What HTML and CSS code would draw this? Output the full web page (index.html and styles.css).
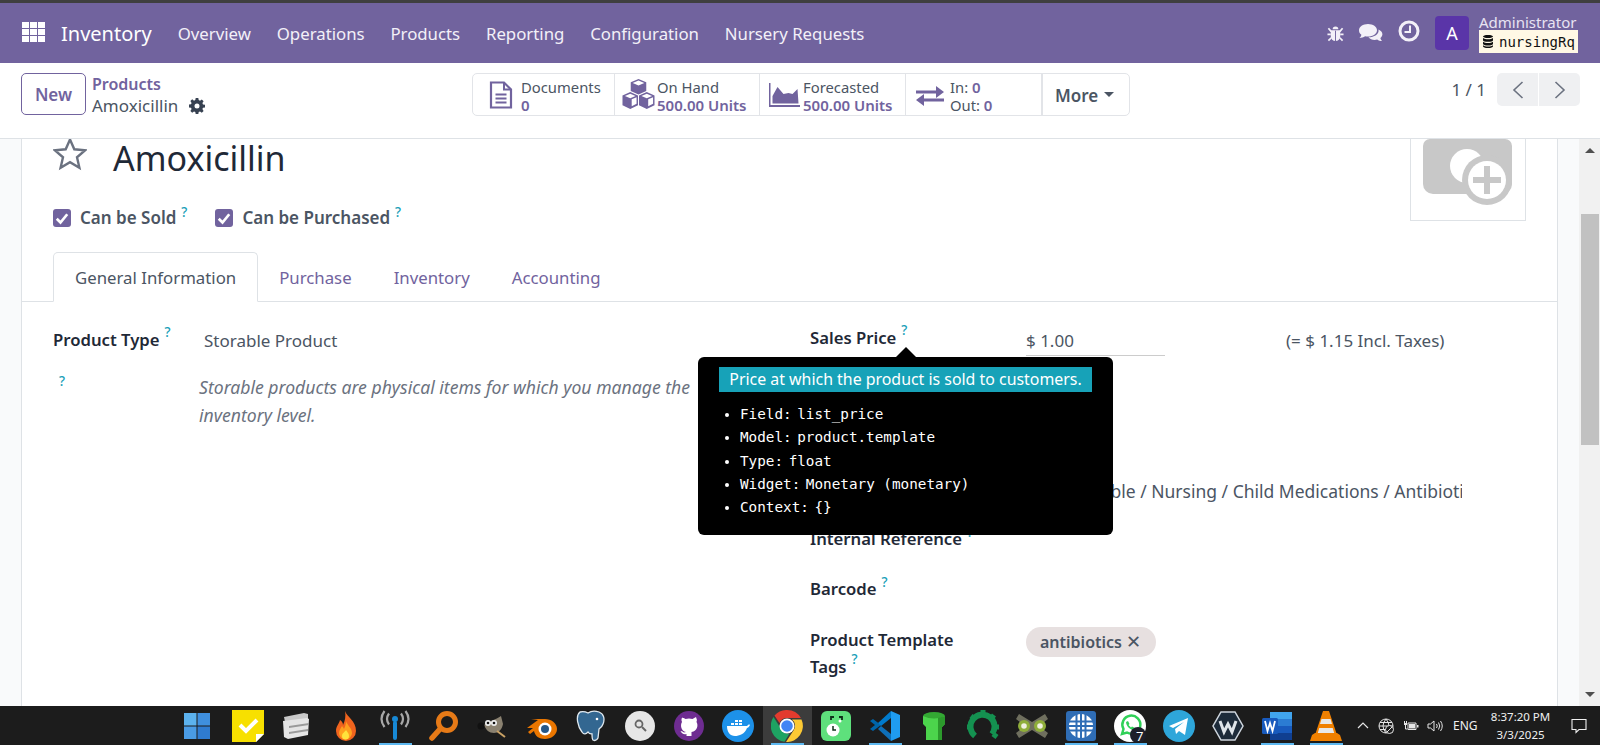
FILE: index.html
```html
<!DOCTYPE html>
<html lang="en">
<head>
    <meta charset="UTF-8">
    <meta name="viewport" content="width=device-width, initial-scale=1.0">
    <title>Amoxicillin - Inventory</title>
    <link rel="stylesheet" href="styles.css">
</head>
<body>

<div class="top-strip"></div>

<!-- Main navbar -->
<header class="navbar">
    <svg class="apps-icon" viewBox="0 0 23 20"><path fill="#fff" d="M0 0h7v6H0zM8 0h7v6H8zM16 0h7v6h-7zM0 7h7v6H0zM8 7h7v6H8zM16 7h7v6h-7zM0 14h7v6H0zM8 14h7v6H8zM16 14h7v6h-7z"/></svg>
    <span class="brand">Inventory</span>
    <nav class="menu">
        <a>Overview</a>
        <a>Operations</a>
        <a>Products</a>
        <a>Reporting</a>
        <a>Configuration</a>
        <a>Nursery Requests</a>
    </nav>
    <div class="systray">
        <svg class="tray-bug" viewBox="0 0 18 18"><path fill="#f3f0f8" d="M6 4.500a3 3 0 0 1 6 0zM5 5.500h8a1 1 0 0 1 1 1V12a5 5 0 0 1-10 0V6.500a1 1 0 0 1 1-1z"/><path stroke="#f3f0f8" stroke-width="1.800" fill="none" d="M1.500 3.500 4.500 7M16.500 3.500 13.500 7M.5 10h3.500M14 10h3.500M1.500 16.500l3-3M16.500 16.500l-3-3"/><path stroke="#71639e" d="M9 6v11"/></svg>
        <svg class="tray-chat" viewBox="0 0 25 20"><path fill="#f3f0f8" d="M10 1c5 0 9 2.800 9 6.300s-4 6.300-9 6.300c-1 0-2-.1-2.900-.3C5.500 14.500 3.500 15 1.500 15c1-1 1.800-2.200 1.900-3.300C1.600 10.500 1 9 1 7.300 1 3.800 5 1 10 1z"/><path fill="#f3f0f8" d="M20.500 6.500c2.400 1 3.900 2.800 3.900 4.800 0 1.500-.8 2.800-2 3.800.1 1.100.8 2.200 1.600 3-1.800 0-3.400-.5-4.800-1.500-.8.200-1.600.3-2.500.3-2.700 0-5-1-6.300-2.600 5.800 0 11-3 10.100-7.800z"/></svg>
        <svg class="tray-clock" viewBox="0 0 22 22"><circle cx="11" cy="11" r="9" fill="none" stroke="#f3f0f8" stroke-width="3"/><path fill="none" stroke="#f3f0f8" stroke-width="2" d="M12 5.500V12H6.500"/></svg>
        <div class="avatar">A</div>
        <div class="user">
            <div class="user-name">Administrator</div>
            <div class="db-badge">
                <svg class="db-icon" viewBox="0 0 12 13"><path fill="#111" d="M1 1.500C1 .6 3 0 6 0s5 .6 5 1.500S9 3 6 3 1 2.400 1 1.500zM1 3c1 .9 3 1.300 5 1.300S10 3.900 11 3v2.200C11 6.100 9 6.800 6 6.800S1 6.100 1 5.200zM1 6.800c1 .9 3 1.300 5 1.300s4-.4 5-1.300V9C11 9.900 9 10.500 6 10.500S1 9.900 1 9z"/><path fill="#111" d="M1 10.300c1 .8 3 1.200 5 1.200s4-.4 5-1.200v.9C11 12.200 9 13 6 13s-5-.8-5-1.800z"/></svg>
                <span>nursingRq</span>
            </div>
        </div>
    </div>
</header>

<!-- Control panel -->
<section class="control-panel">
    <button class="btn-new">New</button>
    <div class="breadcrumb">
        <a>Products</a>
        <div class="crumb-current">Amoxicillin
            <svg class="gear" viewBox="0 0 16 16"><path fill="#374151" fill-rule="evenodd" d="M6.700 0h2.600l.4 2.100 1.300.6 1.800-1.200 1.800 1.800-1.200 1.800.6 1.300 2 .4v2.600l-2 .4-.6 1.300 1.200 1.800-1.800 1.800-1.800-1.200-1.300.6-.4 2H6.700l-.4-2-1.300-.6-1.800 1.200-1.800-1.800 1.200-1.800-.6-1.300-2-.4V6.600l2-.4.6-1.300-1.200-1.800 1.800-1.800L5 2.700l1.300-.6zM8 5.500a2.500 2.500 0 1 0 0 5 2.500 2.500 0 0 0 0-5z"/></svg>
        </div>
    </div>

    <div class="stat-bar">
        <div class="stat stat-docs">
            <svg class="stat-icon" width="24" height="28" viewBox="0 0 24 28"><path fill="none" stroke="#71639e" stroke-width="2.200" d="M2 1.500h13l7 7v18H2z"/><path fill="none" stroke="#71639e" stroke-width="2" d="M15 1.500v7h7M6.500 13.500h11M6.500 17.500h11M6.500 21.500h11"/></svg>
            <div class="stat-text"><span>Documents</span><b>0</b></div>
        </div>
        <div class="stat stat-hand">
            <svg class="stat-icon" width="33" height="33" viewBox="0 0 34 34"><path fill="#71639e" d="M17 1l8 3.500v9L17 17l-8-3.500v-9z"/><path fill="#71639e" d="M8.500 14.500l8 3.500v10l-8 4-8-4V18zM25.500 14.500l8 3.500v10l-8 4-8-4V18z"/><path fill="#fff" d="M11 5.200l6 2.600 6-2.600-6-2.500zM3 18.500l5.500 2.300 5.500-2.300-5.500-2.300zM20 18.500l5.500 2.300 5.500-2.300-5.500-2.300zM10 22v7l5-2.500v-6.700zM27 22v7l5-2.500v-6.700z"/></svg>
            <div class="stat-text"><span>On Hand</span><b>500.00 Units</b></div>
        </div>
        <div class="stat stat-fore">
            <svg class="stat-icon" width="31" height="24" viewBox="0 0 31 24"><path fill="#71639e" d="M0 0h1.500v22H31v2H0z"/><path fill="#71639e" d="M3.500 20.500V13l5-9 6 7 5-1 4 1 5-5 1 14.500z"/></svg>
            <div class="stat-text"><span>Forecasted</span><b>500.00 Units</b></div>
        </div>
        <div class="stat stat-move">
            <svg class="stat-icon" width="28" height="24" viewBox="0 0 28 24"><path fill="#71639e" d="M0 6.500h20V2l8 6-8 6V9.500H0zM28 14.500H8V10l-8 6 8 6v-4.500h20z" transform="translate(0 1)"/></svg>
            <div class="stat-text"><span>In: <b>0</b></span><span>Out: <b>0</b></span></div>
        </div>
        <div class="stat-more">More <i class="caret"></i></div>
    </div>

    <div class="pager">
        <span class="pager-count">1 / 1</span>
        <div class="pager-btns">
            <button><svg viewBox="0 0 12 20" width="12" height="20"><path fill="none" stroke="#6b7280" stroke-width="1.600" d="M10.500 2 2 10l8.500 8"/></svg></button>
            <button><svg viewBox="0 0 12 20" width="12" height="20"><path fill="none" stroke="#6b7280" stroke-width="1.600" d="M1.500 2 10 10l-8.500 8"/></svg></button>
        </div>
    </div>
</section>

<!-- Form view -->
<main class="content">
    <div class="sheet">
        <div class="sheet-top">
            <div class="sheet-head">
                <div class="title-row">
                    <svg class="star" viewBox="0 0 34 34"><path fill="none" stroke="#6b7280" stroke-width="2.400" d="M17 2.500l4.300 9.800 10.700 1-8 7 2.400 10.400L17 25.200l-9.400 5.500L10 20.300l-8-7 10.700-1z"/></svg>
                    <h1>Amoxicillin</h1>
                </div>
                <div class="options">
                    <label class="check"><i class="box"><svg viewBox="0 0 12 12"><path fill="none" stroke="#fff" stroke-width="1.800" d="M2.500 6.500 5 9l4.500-5.500"/></svg></i>Can be Sold<sup>?</sup></label>
                    <label class="check"><i class="box"><svg viewBox="0 0 12 12"><path fill="none" stroke="#fff" stroke-width="1.800" d="M2.500 6.500 5 9l4.500-5.500"/></svg></i>Can be Purchased<sup>?</sup></label>
                </div>
            </div>
            <div class="product-image">
                <svg viewBox="0 0 90 68" width="90" height="68"><path fill="#c8c8c8" d="M7 0h75a7 7 0 0 1 7 7v38a10 10 0 0 1-10 10H10A10 10 0 0 1 0 45V7a7 7 0 0 1 7-7z"/><circle cx="44" cy="27" r="17" fill="#fff"/><circle cx="64" cy="41" r="25" fill="#c8c8c8"/><circle cx="64" cy="41" r="19" fill="#fff"/><path fill="#c8c8c8" d="M61 27h6v11h11v6H67v11h-6V44H50v-6h11z"/></svg>
            </div>
        </div>

        <div class="tabs">
            <a class="active">General Information</a>
            <a>Purchase</a>
            <a>Inventory</a>
            <a>Accounting</a>
        </div>

        <div class="form-body">
            <div class="col-left">
                <div class="type-row">
                    <label class="field-label">Product Type<sup>?</sup></label>
                    <span class="type-value">Storable Product</span>
                </div>
                <div class="type-help">
                    <sup class="help-mark">?</sup>
                    <p>Storable products are physical items for which you manage the inventory level.</p>
                </div>
            </div>
            <div class="col-right">
                <div class="row">
                    <label class="field-label">Sales Price<sup>?</sup></label>
                    <div class="price-wrap"><span class="price-input">$ 1.00</span><span class="price-taxes">(= $ 1.15 Incl. Taxes)</span></div>
                </div>
                <div class="row"></div>
                <div class="row"></div>
                <div class="row">
                    <label class="field-label"></label>
                    <div class="category">All / Saleable / Nursing / Child Medications / Antibiotics</div>
                </div>
                <div class="row">
                    <label class="field-label">Internal Reference<sup>?</sup></label>
                </div>
                <div class="row">
                    <label class="field-label">Barcode<sup>?</sup></label>
                </div>
                <div class="row">
                    <label class="field-label field-label-wrap">Product Template Tags<sup>?</sup></label>
                    <div class="tag">antibiotics <span class="tag-x">✕</span></div>
                </div>
            </div>
        </div>
    </div>

    <div class="scrollbar">
        <i class="arrow-up"></i>
        <div class="thumb"></div>
        <i class="arrow-down"></i>
    </div>

    <!-- Debug tooltip -->
    <div class="tooltip">
        <i class="tooltip-arrow"></i>
        <div class="tooltip-title">Price at which the product is sold to customers.</div>
        <ul>
            <li><span>Field:</span> list_price</li>
            <li><span>Model:</span> product.template</li>
            <li><span>Type:</span> float</li>
            <li><span>Widget:</span> Monetary (monetary)</li>
            <li><span>Context:</span> {}</li>
        </ul>
    </div>
</main>

<!-- Windows taskbar -->
<footer class="taskbar">
    <div class="task-apps">
        <div class="task task-start"><svg viewBox="0 0 32 32"><path fill="#5cb2ee" d="M3 3h12.500v12.500H3z"/><path fill="#3f8fde" d="M16.500 3H29v12.500H16.500z"/><path fill="#4a9be4" d="M3 16.500h12.500V29H3z"/><path fill="#2f7bd0" d="M16.500 16.500H29V29H16.500z"/></svg></div>
        <div class="task"><svg viewBox="0 0 32 32"><path fill="#f7e000" d="M0 0h32v24l-8 8H0z"/><path fill="#fff" d="M24 32v-8h8z"/><path fill="none" stroke="#fff" stroke-width="4" d="M8 15l6 6 11-11"/></svg></div>
        <div class="task"><svg viewBox="0 0 32 32"><path fill="#c9c9c9" d="M3 7l20-4 4 1v16L7 26z"/><path fill="#e5e5e5" d="M2 11l24-3 2 1-1 16-20 4-4-2z"/><path fill="#9a9a9a" d="M8 16l20-3v2L8 18zM8 22l19-3v2L8 24z"/></svg></div>
        <div class="task"><svg viewBox="0 0 32 32"><path fill="#f0641e" d="M15 1c2 6 11 10 11 20a10 10 0 0 1-20 0c0-5 3-7 4-11 2 1 3 3 3 5 2-4 3-9 2-14z"/><path fill="#ffa01e" d="M16 11c1 4 6 7 6 12a6.500 6.500 0 0 1-13 0c0-3 2-5 3-7 1 1 1.500 2 2 3 1-2 2-5 2-8z"/><path fill="#ffe23c" d="M16 20c1 2 3 3 3 6a3.500 3.500 0 0 1-7 0c0-3 3-4 4-6z"/></svg></div>
        <div class="task run"><svg viewBox="0 0 32 32"><rect x="14" y="11" width="4" height="19" rx="2" fill="#1789d6"/><circle cx="16" cy="9" r="3" fill="#1789d6"/><path fill="none" stroke="#a8a8a8" stroke-width="2.200" d="M10 3.500q-4 5.500 0 11M22 3.500q4 5.500 0 11M5.500 1q-6 8 0 16M26.500 1q6 8 0 16"/></svg></div>
        <div class="task"><svg viewBox="0 0 32 32"><circle cx="19" cy="12" r="8.500" fill="none" stroke="#e67a17" stroke-width="5"/><path stroke="#e67a17" stroke-width="5.500" stroke-linecap="round" d="M12.500 18.500 4 28"/></svg></div>
        <div class="task"><svg viewBox="0 0 32 32"><path fill="#8a8170" d="M7 15c4-4 12-5 17-9l2 8c-1 6-5 9-9 9-5 0-8-3-10-8z"/><circle cx="4" cy="16" r="3.500" fill="#111"/><circle cx="11" cy="13" r="3" fill="#eee"/><circle cx="17" cy="13" r="3" fill="#eee"/><circle cx="11" cy="13" r="1.300" fill="#111"/><circle cx="17" cy="13" r="1.300" fill="#111"/><path stroke="#caa265" stroke-width="2" d="M20 21l8 6"/></svg></div>
        <div class="task"><svg viewBox="0 0 32 32"><path fill="#ea7600" d="M1 18l11-8-7-1h14c6 0 12 4 12 10s-6 10-12 10c-6 0-10-3-11-8l-4 3-2-2 5-4z"/><circle cx="19" cy="19" r="6.500" fill="#fff"/><circle cx="19" cy="19" r="4" fill="#265787"/></svg></div>
        <div class="task"><svg viewBox="0 0 32 32"><path fill="#336791" stroke="#dfe8ef" stroke-width="1.300" d="M5 2c4-1 6 0 8 1 3-2 8-2 11-1 5 2 6 7 4 12-1 3-3 4-4 5l-1 9c-1 2-3 3-5 2-1-1-1-4-1-6-2 0-3 0-4-2-2 2-4 3-6 0C3 17 0 6 5 2z"/><circle cx="22" cy="9" r="1.300" fill="#fff"/></svg></div>
        <div class="task"><svg viewBox="0 0 32 32"><circle cx="16" cy="16" r="15" fill="#e6e6e6"/><circle cx="15" cy="14" r="3.500" fill="none" stroke="#666" stroke-width="1.800"/><path stroke="#666" stroke-width="2" d="M18 17l4 4"/></svg></div>
        <div class="task"><svg viewBox="0 0 32 32"><circle cx="16" cy="16" r="15" fill="#6e2c91"/><path fill="#fff" d="M9 7l3.500 2q3.500-1 7 0L23 7q1.500 3 .5 5c2 3 1 9-5 10v4h-5v-2c-3 1-5-1-6-3 1.500 0 2.500 1 3.500 1.500l2-.5V22c-5-1-6-7-4-10-1-2-.500-4 .5-5z"/></svg></div>
        <div class="task"><svg viewBox="0 0 32 32"><circle cx="16" cy="16" r="16" fill="#1d91e9"/><path fill="#fff" d="M5 16h20c1-1 2-2 3-1-1 2-2 3-3 3-2 6-8 8-12 8-5 0-8-4-8-10z"/><path fill="#fff" d="M9 13h3v2H9zM13 13h3v2h-3zM17 13h3v2h-3zM13 10h3v2h-3zM17 10h3v2h-3z"/></svg></div>
        <div class="task run active"><svg viewBox="0 0 32 32"><path fill="#e33b2e" d="M16 0a16 16 0 0 1 13.900 8H16a8 8 0 0 0-7.500 5L3.500 5.500A16 16 0 0 1 16 0z"/><path fill="#1ea362" d="M2.500 7a16 16 0 0 0 11 24.800l5-8.300a8 8 0 0 1-9-5.500z"/><path fill="#fcc934" d="M30.500 9.500H21a8 8 0 0 1 1.800 10.500L15 32a16 16 0 0 0 15.500-22.500z"/><circle cx="16" cy="16" r="7.500" fill="#fff"/><circle cx="16" cy="16" r="5.800" fill="#4285f4"/></svg></div>
        <div class="task"><svg viewBox="0 0 32 32"><rect width="30" height="30" x="1" y="1" rx="6" fill="#5ee07c"/><path fill="none" stroke="#0f2f1a" stroke-width="1.800" d="M11 10V7h3M19 7h3v3"/><circle cx="13" cy="20" r="6.500" fill="#fff"/><path stroke="#0f2f1a" stroke-width="1.500" fill="none" d="M13 16v4h3"/><circle cx="20" cy="11" r="1.500" fill="#fff"/></svg></div>
        <div class="task run"><svg viewBox="0 0 32 32"><path fill="#0065a9" d="M1 11l3-2 8 6-8 6-3-2 5-4z"/><path fill="#007acc" d="M22 1L9 13l3 3L22 8z"/><path fill="#0e6fb8" d="M22 31L9 19l3-3 10 8z"/><path fill="#1f9cf0" d="M22 1l9 4v22l-9 4z"/></svg></div>
        <div class="task"><svg viewBox="0 0 32 32"><ellipse cx="16" cy="6" rx="11" ry="4" fill="#33a833"/><path fill="#4cd44c" d="M5 6q11 5 22 0v8l-3 3v13H8V17l-3-3z"/><path fill="#2c9a2c" d="M20 8l7-2v8l-3 3v13h-4z"/></svg></div>
        <div class="task"><svg viewBox="0 0 32 32"><path fill="none" stroke="#149150" stroke-width="6" d="M8 26A12 12 0 1 1 25 24"/><path stroke="#149150" stroke-width="5" d="M16 0v5M27 5l-3 4M32 17h-5M4 6l4 3M0 17h5M30 27l-4-3"/></svg></div>
        <div class="task"><svg viewBox="0 0 32 32"><path fill="#6f6f5e" d="M3 4l13 8 13-8 3 5-9 7 9 7-3 5-13-8-13 8-3-5 9-7-9-7z"/><circle cx="8" cy="16" r="6" fill="#8fae3a"/><circle cx="24" cy="16" r="6" fill="#8fae3a"/><circle cx="8" cy="16" r="2.800" fill="#f0f0e0"/><circle cx="24" cy="16" r="2.800" fill="#f0f0e0"/></svg></div>
        <div class="task run"><svg viewBox="0 0 32 32"><rect width="30" height="30" x="1" y="1" rx="3" fill="#2f6db5"/><circle cx="16" cy="16" r="12" fill="#fff"/><path stroke="#2f6db5" stroke-width="2" d="M3 11.500h26M3 16h26M3 20.500h26M11.500 3v26M16 3v26M20.500 3v26"/></svg></div>
        <div class="task run"><svg viewBox="0 0 32 32"><circle cx="16" cy="16" r="16" fill="#fff"/><path fill="none" stroke="#30d158" stroke-width="2.500" d="M8 24l1.500-5A9 9 0 1 1 13 22.500z"/><path fill="#30d158" d="M12 12l2-1 1.500 3-1 1 2.500 2.500 1-1 3 1.500-1 2c-4 0-8-4-8-8.500z"/><circle cx="24" cy="25" r="8" fill="#1d1f2b"/></svg><span class="task-badge">7</span></div>
        <div class="task"><svg viewBox="0 0 32 32"><circle cx="16" cy="16" r="16" fill="#2ea6da"/><path fill="#fff" d="M6 16l19-8-3 17-6-4-3 3-1-5 9-7-11 6z"/></svg></div>
        <div class="task"><svg viewBox="0 0 32 32"><path fill="#1d2b3a" stroke="#cfd6de" stroke-width="1.500" d="M9 2h14l8 14-8 14H9L1 16z"/><path fill="none" stroke="#dfe5ea" stroke-width="3" d="M8 11l4 11 4-8 4 8 4-11"/></svg></div>
        <div class="task run"><svg viewBox="0 0 32 32"><path fill="#41a5ee" d="M9 2h22v7H9z"/><path fill="#2b7cd3" d="M9 9h22v7H9z"/><path fill="#185abd" d="M9 16h22v7H9z"/><path fill="#103f91" d="M9 23h22v7H9z"/><rect x="1" y="8" width="16" height="16" rx="1.500" fill="#185abd"/><path fill="none" stroke="#fff" stroke-width="1.800" d="M4 11l2.500 10L9 13l2.500 8L14 11"/></svg></div>
        <div class="task run"><svg viewBox="0 0 32 32"><path fill="#f08000" d="M13 1h6l8 24H5z"/><path fill="#e8e8e8" d="M11.500 9h9l1.500 5H10zM9.300 18h13.400l1.500 5H7.800z"/><path fill="#f08000" d="M2 25l3-2h22l3 2 2 6H0z"/></svg></div>
    </div>
    <div class="tray">
        <svg class="tray-chevron" viewBox="0 0 12 7"><path fill="none" stroke="#e6e6e6" stroke-width="1.200" d="M1 6l5-5 5 5"/></svg>
        <svg class="tray-globe" viewBox="0 0 16 16"><circle cx="8" cy="8" r="7" fill="none" stroke="#e6e6e6"/><path fill="none" stroke="#e6e6e6" d="M1 8h14M8 1q-6 7 0 14M8 1q6 7 0 14M2 4.500h12M2 11.500h12"/><circle cx="11.500" cy="11.500" r="4" fill="#1c1c1c" stroke="#e6e6e6"/><path stroke="#e6e6e6" d="M9 14l5-5"/></svg>
        <svg class="tray-battery" viewBox="0 0 16 12"><path fill="none" stroke="#e6e6e6" d="M5 3h8v6.500H5z"/><path fill="#e6e6e6" d="M14 5h1.500v2.500H14zM6 4h6v4.500H6zM1 3h3v2H1z"/><path fill="none" stroke="#e6e6e6" d="M1.500 1v2M3.500 1v2M2.500 5v4h2"/></svg>
        <svg class="tray-speaker" viewBox="0 0 16 12"><path fill="none" stroke="#e6e6e6" d="M1 4h2.500L7 1v10L3.500 8H1zM9.500 4q1.500 2 0 4M11.500 2.500q2.500 3.500 0 7M13.500 1q3.500 5 0 10"/></svg>
        <span class="lang">ENG</span>
        <div class="clock"><div>8:37:20 PM</div><div>3/3/2025</div></div>
        <svg class="tray-notify" viewBox="0 0 16 16"><path fill="none" stroke="#f0f0f0" stroke-width="1.100" d="M1 1.500h14v10H8L5 14.500v-3H1z"/></svg>
    </div>
</footer>

</body>
</html>
```

FILE: styles.css
```css
/* General Styling */
* {
    box-sizing: border-box;
}

body {
    margin: 0;
    height: 745px;
    overflow: hidden;
    display: flex;
    flex-direction: column;
    font-family: "Noto Sans", "Open Sans", sans-serif;
    font-size: 17px;
    color: #374151;
    background-color: #fff;
}

sup {
    font-size: 13.500px;
    color: #1a9fb8;
    margin-left: 5px;
    font-weight: 500;
    line-height: 0;
    position: relative;
    top: -2px;
}

.top-strip {
    height: 3px;
    background-color: #3f3f3f;
}

/* Navbar */
.navbar {
    height: 60px;
    background-color: #71639e;
    color: #fff;
    display: flex;
    align-items: center;
    padding-left: 22px;
    flex: none;
}

.apps-icon {
    width: 23px;
    height: 20px;
    margin-top: -3px;
}

.brand {
    font-size: 20px;
    margin-left: 16px;
}

.menu {
    display: flex;
    gap: 25.800px;
    margin-left: 26px;
    font-size: 16.800px;
    color: #f3f0f8;
}

.systray {
    margin-left: auto;
    display: flex;
    align-items: center;
    padding-right: 22px;
}

.tray-bug {
    width: 17px;
    height: 17px;
}

.tray-chat {
    width: 25px;
    height: 20px;
    margin-left: 14px;
}

.tray-clock {
    width: 22px;
    height: 22px;
    margin-left: 15px;
    margin-top: -4px;
}

.avatar {
    width: 34px;
    height: 34px;
    background-color: #5a35a8;
    border-radius: 4px;
    display: flex;
    align-items: center;
    justify-content: center;
    font-size: 18px;
    margin-left: 15px;
}

.user {
    margin-left: 10px;
    width: 99px;
}

.user-name {
    font-size: 15px;
    line-height: 15px;
    color: #e8e4f2;
    padding-top: 2px;
}

.db-badge {
    background-color: #fff8e5;
    color: #111;
    height: 23px;
    display: flex;
    align-items: center;
    padding-left: 3px;
    font-family: "DejaVu Sans Mono", monospace;
    font-size: 14px;
}

.db-icon {
    width: 12px;
    height: 13px;
    margin-right: 5px;
}

/* Control Panel */
.control-panel {
    height: 76px;
    flex: none;
    border-bottom: 1px solid #dee2e6;
    display: flex;
    align-items: flex-start;
    padding: 10px 20px 0 21px;
}

.btn-new {
    width: 65px;
    height: 42px;
    background-color: #fff;
    color: #71639e;
    border: 1px solid #71639e;
    border-radius: 5px;
    font-family: inherit;
    font-size: 17px;
    font-weight: 600;
}

.breadcrumb {
    margin-left: 6px;
    width: 118px;
    flex: none;
    line-height: 22px;
}

.breadcrumb a {
    color: #71639e;
    font-weight: 600;
    font-size: 16px;
}

.crumb-current {
    display: flex;
    align-items: center;
    gap: 11px;
    color: #4b5563;
}

.gear {
    width: 16px;
    height: 16px;
}

.stat-bar {
    margin-left: 262px;
    width: 658px;
    height: 43px;
    border: 1px solid #e2e4e8;
    border-radius: 5px;
    display: flex;
    flex: none;
}

.stat {
    display: flex;
    align-items: center;
    gap: 8px;
    padding-left: 16px;
    border-right: 1px solid #e2e4e8;
}

.stat-docs { width: 142px; }
.stat-hand { width: 145px; padding-left: 7px; gap: 2px; }
.stat-fore { width: 146px; padding-left: 9px; gap: 3px; }
.stat-move { width: 136px; padding-left: 10px; gap: 6px; }

.stat-text {
    display: flex;
    flex-direction: column;
    font-size: 14.800px;
    line-height: 18px;
    padding-top: 2px;
    color: #4b5563;
    white-space: nowrap;
}

.stat-text b {
    color: #71639e;
    font-weight: 600;
    font-size: 15px;
}

.stat-more {
    flex: 1;
    display: flex;
    align-items: center;
    padding: 2px 0 0 12px;
    font-weight: 600;
    color: #4b5563;
    border-left: 1px solid #e2e4e8;
}

.caret {
    width: 0;
    height: 0;
    border-left: 5px solid transparent;
    border-right: 5px solid transparent;
    border-top: 5px solid #4b5563;
    margin-left: 6px;
    margin-top: -2px;
}

.pager {
    margin-left: auto;
    display: flex;
    align-items: center;
    gap: 11px;
}

.pager-count {
    color: #4b5563;
}

.pager-btns {
    display: flex;
    gap: 1px;
}

.pager-btns button {
    width: 41px;
    height: 33px;
    border: none;
    background-color: #eff0f2;
    display: flex;
    align-items: center;
    justify-content: center;
    padding: 0;
}

.pager-btns button:first-child { border-radius: 5px 0 0 5px; }
.pager-btns button:last-child { border-radius: 0 5px 5px 0; }

/* Form view */
.content {
    flex: 1;
    min-height: 0;
    position: relative;
    display: flex;
    overflow: hidden;
    background-color: #f9fafb;
    padding-left: 21px;
}

.sheet {
    width: 1537px;
    flex: none;
    background-color: #fff;
    border-left: 1px solid #dee2e6;
    border-right: 1px solid #dee2e6;
}

.sheet-top {
    display: flex;
    justify-content: space-between;
    height: 113px;
    padding: 0 31px;
}

.title-row {
    display: flex;
    height: 61px;
}

.star {
    width: 34px;
    height: 34px;
    margin-top: -2px;
}

h1 {
    margin: 0 0 0 26px;
    font-size: 34px;
    font-weight: 400;
    color: #1f2937;
    line-height: 38px;
}

.product-image {
    width: 116px;
    height: 82px;
    border: 1px solid #dee2e6;
    border-top: none;
    padding-left: 12px;
}

.options {
    display: flex;
    gap: 28px;
    font-weight: 600;
    color: #4b5563;
    height: 35px;
    align-items: center;
}

.check {
    display: flex;
    align-items: center;
}

.check sup {
    top: -6px;
}

.box {
    width: 18px;
    height: 18px;
    background-color: #71639e;
    border-radius: 3px;
    margin-right: 9px;
    display: flex;
}

.tabs {
    display: flex;
    padding-left: 31px;
    height: 50px;
    border-bottom: 1px solid #dee2e6;
    font-size: 16.800px;
    color: #71639e;
}

.tabs a {
    padding: 0 21px;
    line-height: 51px;
    height: 50px;
}

.tabs a.active {
    color: #4b5563;
    background-color: #fff;
    border: 1px solid #dee2e6;
    border-bottom-color: #fff;
    border-radius: 5px 5px 0 0;
    height: 50px;
    line-height: 49px;
}

.form-body {
    display: flex;
    padding-left: 31px;
    padding-top: 22px;
}

.col-left {
    width: 757px;
    flex: none;
}

.field-label {
    font-weight: 600;
    font-size: 16.700px;
    color: #1f2937;
    display: block;
    line-height: 27px;
}

.type-row {
    display: flex;
    height: 49px;
    padding-top: 2px;
}

.type-row .field-label {
    width: 151px;
}

.type-value {
    color: #4b5563;
    margin-top: 3px;
}

.type-help {
    display: flex;
    padding-left: 6px;
}

.help-mark {
    margin-left: 0;
    line-height: 20px;
    width: 140px;
    flex: none;
    top: -2px;
}

.type-help p {
    margin: 0;
    font-style: italic;
    font-size: 17.600px;
    line-height: 28px;
    color: #6b7280;
    width: 540px;
}

.col-right {
    flex: 1;
}

.row {
    display: flex;
    height: 50.300px;
}

.row .field-label {
    width: 216px;
    flex: none;
}

.field-label-wrap {
    padding-right: 40px;
}

.price-wrap {
    display: flex;
    color: #4b5563;
    padding-top: 5px;
}

.price-input {
    display: block;
    width: 139px;
    height: 27px;
    border-bottom: 1px solid #ccc;
}

.price-taxes {
    margin-left: 121px;
}

.category {
    width: 436px;
    overflow: hidden;
    white-space: nowrap;
    font-size: 17.500px;
    color: #4b5563;
    padding: 4px 0 0 5px;
}

.tag {
    height: 30px;
    width: 130px;
    margin-top: 1px;
    padding-left: 14px;
    border-radius: 15px;
    background-color: #e7e0e0;
    font-size: 16px;
    font-weight: 600;
    line-height: 28px;
    color: #4b5563;
    white-space: nowrap;
}

.tag-x {
    font-weight: 500;
    font-size: 18px;
}

/* Scrollbar */
.scrollbar {
    position: absolute;
    top: 0;
    right: 0;
    bottom: 0;
    width: 21px;
    background-color: #f1f1f1;
}

.arrow-up,
.arrow-down {
    position: absolute;
    left: 6px;
    width: 0;
    height: 0;
    border-left: 5px solid transparent;
    border-right: 5px solid transparent;
}

.arrow-up {
    top: 9px;
    border-bottom: 5px solid #505050;
}

.arrow-down {
    bottom: 9px;
    border-top: 5px solid #505050;
}

.thumb {
    position: absolute;
    top: 75px;
    left: 2px;
    width: 18px;
    height: 231px;
    background-color: #c1c1c1;
}

/* Tooltip */
.tooltip {
    position: absolute;
    left: 698px;
    top: 218px;
    width: 415px;
    height: 178px;
    background-color: #000;
    border-radius: 6px;
    padding: 10px 21px;
    color: #fff;
}

.tooltip-arrow {
    position: absolute;
    left: 198px;
    top: -10px;
    width: 0;
    height: 0;
    border-left: 10px solid transparent;
    border-right: 10px solid transparent;
    border-bottom: 10px solid #000;
}

.tooltip-title {
    height: 25px;
    line-height: 24px;
    background-color: #17a2b8;
    text-align: center;
    font-size: 15.900px;
    white-space: nowrap;
}

.tooltip ul {
    margin: 11px 0 0;
    padding-left: 21px;
    font-family: "DejaVu Sans Mono", monospace;
    font-size: 14.300px;
    line-height: 23.300px;
}

.tooltip li span {
    margin-right: -3px;
}

/* Taskbar */
.taskbar {
    height: 39px;
    flex: none;
    background-color: #1c1c1c;
    display: flex;
    color: #f0f0f0;
}

.task-apps {
    display: flex;
    margin-left: 172px;
}

.task {
    width: 49px;
    height: 39px;
    display: flex;
    align-items: center;
    justify-content: center;
    position: relative;
}

.task-start {
    width: 51.500px;
    padding-right: 2.500px;
}

.task svg {
    width: 32px;
    height: 32px;
}

.task.active {
    background-color: #3c3c3c;
}

.task.run::after {
    content: "";
    position: absolute;
    left: 8px;
    right: 8px;
    bottom: 0;
    height: 2px;
    background-color: #5db8f0;
}

.task-badge {
    position: absolute;
    right: 11px;
    bottom: 1px;
    color: #fff;
    font-size: 13px;
    line-height: 15px;
}

.tray {
    display: flex;
    align-items: center;
    margin-left: 6.500px;
}

.tray-chevron {
    width: 12px;
    height: 7px;
}

.tray-globe {
    width: 16px;
    height: 16px;
    margin-left: 9px;
}

.tray-battery {
    width: 16px;
    height: 12px;
    margin-left: 9px;
}

.tray-speaker {
    width: 16px;
    height: 12px;
    margin-left: 8px;
}

.lang {
    font-size: 12px;
    margin-left: 10px;
}

.clock {
    font-size: 11.500px;
    line-height: 18px;
    text-align: center;
    width: 66px;
    margin-left: 10px;
}

.tray-notify {
    width: 16px;
    height: 16px;
    margin-left: 17px;
}
```
